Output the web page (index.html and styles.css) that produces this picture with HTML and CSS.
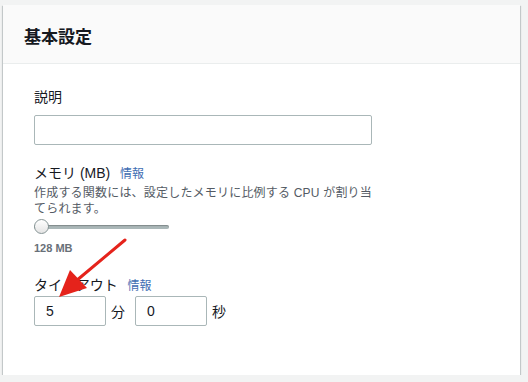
FILE: index.html
```html
<!DOCTYPE html>
<html lang="ja">
<head>
  <meta charset="UTF-8" />
  <title>基本設定</title>
  <link rel="stylesheet" href="styles.css">
</head>
<body>

  <section class="panel">
    <header class="panel-header">
      <h2>基本設定</h2>
    </header>

    <div class="panel-body">
      <div class="field">
        <label for="desc">説明</label>
        <input type="text" id="desc" class="text-input wide" />
      </div>

      <div class="field memory">
        <label>メモリ (MB) <a href="#" class="info">情報</a></label>
        <p class="hint">作成する関数には、設定したメモリに比例する CPU が割り当てられます。</p>
        <div class="slider"><span class="thumb"></span></div>
        <div class="value">128 MB</div>
      </div>

      <div class="field timeout">
        <label>タイムアウト <a href="#" class="info">情報</a></label>
        <div class="time-row">
          <input type="text" class="text-input short" value="5" />
          <span class="unit">分</span>
          <input type="text" class="text-input short" value="0" />
          <span class="unit">秒</span>
        </div>
      </div>
    </div>

    <!-- annotation arrow -->
    <svg class="arrow" width="528" height="382" viewBox="0 0 528 382">
      <line x1="125" y1="240" x2="76" y2="281" stroke="#e5231b" stroke-width="3" stroke-linecap="round" />
      <polygon points="59,297 70,270 87,288" fill="#e5231b" />
    </svg>
  </section>

</body>
</html>
```

FILE: styles.css
```css
:root {
  --bg: #f2f3f3;
  --text-dark: #16191f;
  --text-grey: #545b64;
  --border: #aab7b8;
  --link: #3f6eb3;
}

body {
  margin: 0;
  background: var(--bg);
  font-family: "Liberation Sans", "Noto Sans CJK JP", sans-serif;
  color: var(--text-dark);
}

.panel {
  margin: 5px 0 0 3px;
  width: 517px;
  height: 370px;
  background: #fff;
  box-shadow: 0 1px 1px 0 rgba(0,28,36,0.3), 1px 1px 1px 0 rgba(0,28,36,0.15), -1px 1px 1px 0 rgba(0,28,36,0.15);
}

.panel-header {
  height: 59px;
  background: #fafafa;
  border-bottom: 1px solid #eaeded;
  display: flex;
  align-items: center;
  padding-left: 21px;
  box-sizing: border-box;
}

.panel-header h2 {
  margin: 0;
  font-size: 17px;
  font-weight: bold;
  padding-top: 2px;
}

.panel-body {
  padding: 23px 0 0 31px;
}

label {
  display: block;
  font-size: 14px;
  line-height: 20px;
  color: var(--text-dark);
}

.info {
  color: var(--link);
  font-size: 12px;
  text-decoration: none;
  margin-left: 6px;
}

.text-input {
  display: block;
  box-sizing: border-box;
  height: 30px;
  border: 1px solid var(--border);
  border-radius: 2px;
  font-family: inherit;
  font-size: 14px;
  color: var(--text-dark);
  padding: 0 11px;
  outline: none;
}

.wide {
  width: 338px;
  margin-top: 8px;
}

.memory {
  margin-top: 18px;
}

.hint {
  margin: 1px 0 0;
  width: 340px;
  font-size: 12px;
  line-height: 16px;
  color: var(--text-grey);
  letter-spacing: 0.2px;
}

.slider {
  position: relative;
  width: 135px;
  height: 4px;
  margin-top: 8px;
  background: #aab7b8;
  border-radius: 2px;
  box-shadow: inset 0 1px 1px rgba(0,0,0,0.25);
}

.thumb {
  position: absolute;
  left: 0;
  top: -6px;
  width: 15px;
  height: 15px;
  border-radius: 50%;
  background: linear-gradient(#ffffff, #e4e4e4);
  border: 1px solid #879596;
  box-sizing: border-box;
}

.value {
  margin-top: 12px;
  font-size: 11px;
  font-weight: bold;
  color: #687078;
  line-height: 14px;
}

.timeout {
  margin-top: 22px;
}

.timeout label {
  line-height: 16px;
}

.time-row {
  display: flex;
  align-items: center;
  margin-top: 2px;
}

.short {
  width: 72px;
}

.unit {
  font-size: 14px;
  margin: 0 10px 0 5px;
}

.arrow {
  position: absolute;
  left: 0;
  top: 0;
  pointer-events: none;
}
```
